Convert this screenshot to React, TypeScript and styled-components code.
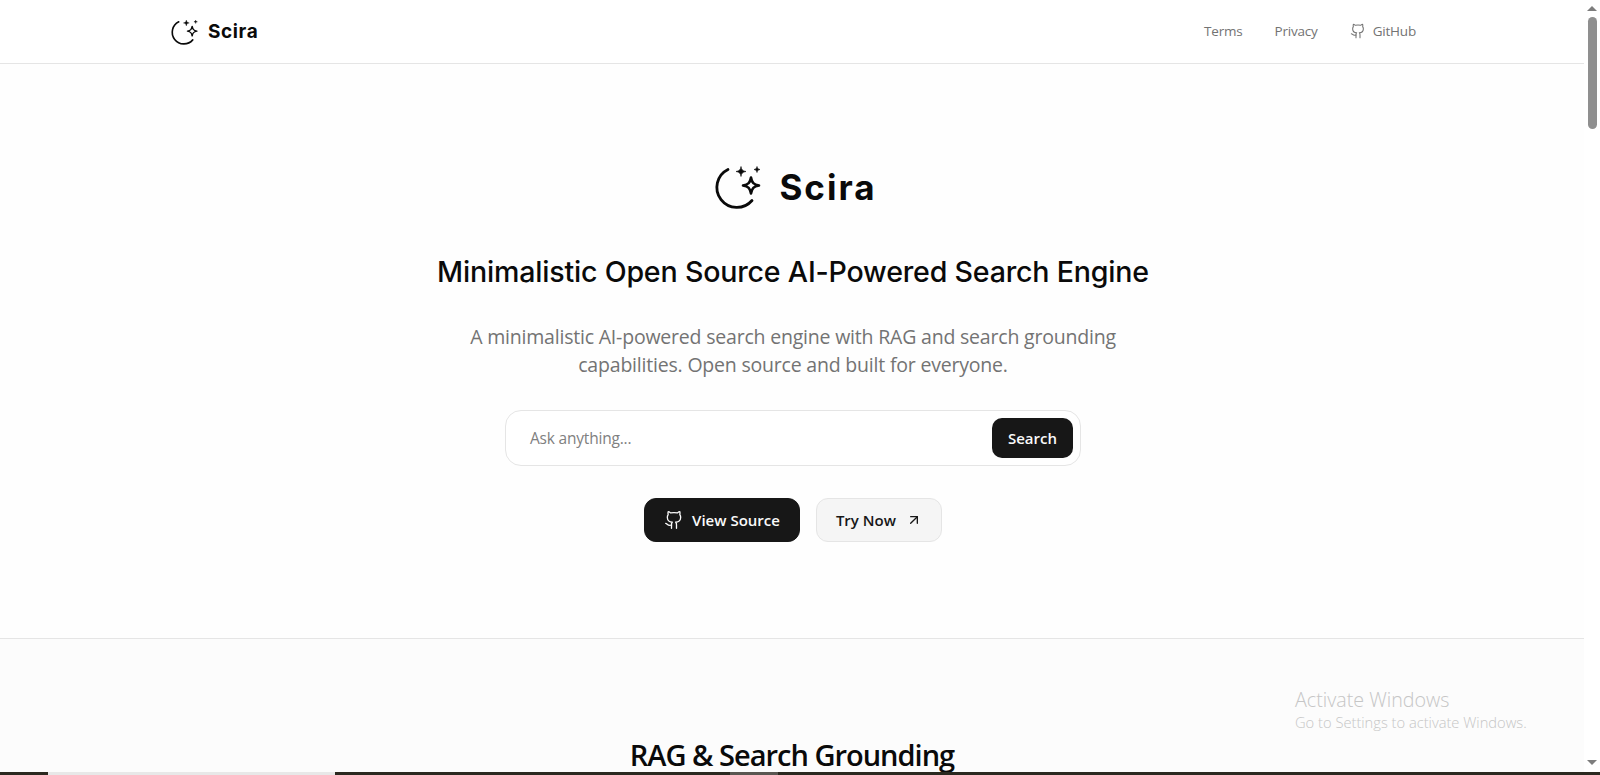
import React from 'react';
import styled, { createGlobalStyle } from 'styled-components';
import { ArrowUpRight } from 'lucide-react';

const GlobalStyle = createGlobalStyle`
  html, body {
    margin: 0;
    height: 100%;
    overflow: hidden;
    background: #fff;
    font-family: "Open Sans", "Noto Sans", sans-serif;
  }
  #root { height: 100%; }
  * { box-sizing: border-box; }
`;

const Screen = styled.div`
  height: 775px;
  display: flex;
  flex-direction: column;
`;

const Viewport = styled.div`
  flex: 1;
  min-height: 0;
  display: flex;
  position: relative;
`;

const Page = styled.div`
  flex: 1;
  min-width: 0;
  overflow: hidden;
`;

const Header = styled.header`
  height: 64px;
  border-bottom: 1px solid #e5e5e5;
  background: #fff;
`;

const HeaderInner = styled.div`
  max-width: 1280px;
  height: 100%;
  margin: 0 auto;
  padding: 0 16px 0 18px;
  display: flex;
  align-items: center;
  justify-content: space-between;
`;

const Brand = styled.div<{ $large?: boolean }>`
  display: flex;
  align-items: center;
  gap: ${p => (p.$large ? '18px' : '10px')};
  padding-left: ${p => (p.$large ? '4px' : '0')};
  color: #0a0a0a;
  font-family: Inter, sans-serif;
  font-weight: 700;
  font-size: ${p => (p.$large ? '35px' : '19px')};
  letter-spacing: ${p => (p.$large ? '2px' : '0.6px')};
`;

const Nav = styled.nav`
  display: flex;
  align-items: center;
  gap: 32px;
  padding-bottom: 2px;
  color: #737373;
  font-size: 13.5px;
  letter-spacing: -0.2px;
`;

const NavItem = styled.span`
  display: flex;
  align-items: center;
  gap: 7px;
`;

const Hero = styled.section`
  height: 574px;
  padding: 99px 0 0 2px;
  display: flex;
  flex-direction: column;
  align-items: center;
  background: #fefefe;
`;

const Title = styled.h1`
  margin: 41px 0 0;
  font-family: Inter, sans-serif;
  font-size: 28.6px;
  line-height: 40px;
  font-weight: 500;
  color: #0a0a0a;
  letter-spacing: -0.2px;
`;

const Lead = styled.p`
  margin: 31px 0 0;
  width: 672px;
  text-align: center;
  color: #737373;
  font-size: 19.5px;
  line-height: 28px;
  letter-spacing: -0.2px;
`;

const SearchBox = styled.div`
  margin-top: 31px;
  width: 576px;
  height: 56px;
  border: 1px solid #e5e5e5;
  border-radius: 16px;
  background: #fff;
  padding: 0 7px 0 24px;
  display: flex;
  align-items: center;
  justify-content: space-between;
`;

const Placeholder = styled.span`
  color: #808080;
  font-size: 15.5px;
  letter-spacing: -0.2px;
`;

const SearchButton = styled.button`
  width: 81px;
  height: 40px;
  border: 0;
  border-radius: 10px;
  background: #171717;
  color: #fafafa;
  font: 600 15px "Open Sans", sans-serif;
`;

const Actions = styled.div`
  margin-top: 32px;
  display: flex;
  gap: 16px;
`;

const ActionButton = styled.button<{ $dark?: boolean }>`
  height: 44px;
  padding: 0 19px;
  display: flex;
  align-items: center;
  gap: ${p => (p.$dark ? '8px' : '10px')};
  border-radius: 12px;
  border: 1px solid ${p => (p.$dark ? '#171717' : '#e5e5e5')};
  background: ${p => (p.$dark ? '#171717' : '#f5f5f5')};
  color: ${p => (p.$dark ? '#fafafa' : '#171717')};
  font: 600 15px "Open Sans", sans-serif;
`;

const Features = styled.section`
  border-top: 1px solid #e5e5e5;
  background: #fcfcfc;
  padding-top: 98px;
  text-align: center;
`;

const FeatureTitle = styled.h2`
  margin: 0;
  font-size: 29px;
  line-height: 36px;
  font-weight: 600;
  color: #0a0a0a;
  letter-spacing: -1px;
`;

const Scrollbar = styled.div`
  width: 16px;
  flex-shrink: 0;
  background: #fff;
  display: flex;
  flex-direction: column;
  align-items: center;
  padding: 6px 0 7px;
`;

const ScrollTrack = styled.div`
  flex: 1;
  width: 100%;
  padding: 6px 3px 0 4px;
`;

const ScrollThumb = styled.div`
  height: 112px;
  border-radius: 5px;
  background: #8f8f8f;
`;

const ScrollArrow = styled.div<{ $down?: boolean }>`
  width: 0;
  height: 0;
  border-left: 5px solid transparent;
  border-right: 5px solid transparent;
  ${p => (p.$down ? 'border-top: 5px solid #7d7d7d;' : 'border-bottom: 5px solid #7d7d7d;')}
`;

const Watermark = styled.div`
  position: absolute;
  left: 1295px;
  top: 687px;
  color: #c6c6c6;
  font-size: 14.7px;
  font-weight: 300;
  line-height: 21px;
`;

const WatermarkTitle = styled.div`
  font-size: 19.7px;
  line-height: 25px;
`;

const Taskbar = styled.div`
  height: 3px;
  flex-shrink: 0;
  background: #2b2920;
  display: flex;
`;

const TaskbarGap = styled.div<{ $w: number; $tone?: string }>`
  width: ${p => p.$w}px;
  background: ${p => p.$tone ?? 'transparent'};
`;

// moon arc with three sparkles
function Logo({ size }: { size: number }) {
  return (
    <svg width={size} height={size} viewBox="0 0 48 48" fill="none" stroke="currentColor">
      <g transform="translate(0 1.5)">
        <path d="M15 5 A20 20 0 1 0 39 36" strokeWidth="2.8" strokeLinecap="round" />
        <path d="M38 13 C39 18.500 40.500 20 46 21 C40.500 22 39 23.500 38 29 C37 23.500 35.500 22 30 21 C35.500 20 37 18.500 38 13 Z" strokeWidth="2.6" strokeLinejoin="round" />
        <path d="M28 2 C28.600 5.400 29.600 6.400 33 7 C29.600 7.600 28.600 8.600 28 12 C27.400 8.600 26.400 7.600 23 7 C26.400 6.400 27.400 5.400 28 2 Z" fill="currentColor" strokeWidth="0.6" />
        <path d="M44 2 C44.400 4 45 4.600 47 5 C45 5.400 44.400 6 44 8 C43.600 6 43 5.400 41 5 C43 4.600 43.600 4 44 2 Z" fill="currentColor" strokeWidth="0.6" />
      </g>
    </svg>
  );
}

function GithubMark({ size }: { size: number }) {
  return (
    <svg width={size} height={size} viewBox="0 0 24 24" fill="none" stroke="currentColor" strokeWidth="1.6" strokeLinecap="round" strokeLinejoin="round">
      <path d="M15 22v-4a4.8 4.8 0 0 0-1-3.5c3 0 6-2 6-5.5.08-1.25-.27-2.48-1-3.5.28-1.15.28-2.35 0-3.5 0 0-1 0-3 1.5-2.64-.5-5.36-.5-8 0C6 2 5 2 5 2c-.3 1.15-.3 2.35 0 3.5A5.403 5.403 0 0 0 4 9c0 3.5 3 5.5 6 5.5-.39.49-.68 1.05-.85 1.65-.17.6-.22 1.23-.15 1.85v4" />
      <path d="M9 18c-4.51 2-5-2-7-2" />
    </svg>
  );
}

export default function App() {
  return (
    <Screen>
      <GlobalStyle />
      <Viewport>
        <Page>
          <Header>
            <HeaderInner>
              <Brand>
                <Logo size={28} />
                Scira
              </Brand>
              <Nav>
                <NavItem>Terms</NavItem>
                <NavItem>Privacy</NavItem>
                <NavItem>
                  <GithubMark size={16} />
                  GitHub
                </NavItem>
              </Nav>
            </HeaderInner>
          </Header>
          <Hero>
            <Brand $large>
              <Logo size={48} />
              Scira
            </Brand>
            <Title>Minimalistic Open Source AI-Powered Search Engine</Title>
            <Lead>
              A minimalistic AI-powered search engine with RAG and search grounding capabilities. Open source and built for everyone.
            </Lead>
            <SearchBox>
              <Placeholder>Ask anything...</Placeholder>
              <SearchButton>Search</SearchButton>
            </SearchBox>
            <Actions>
              <ActionButton $dark>
                <GithubMark size={20} />
                View Source
              </ActionButton>
              <ActionButton>
                Try Now
                <ArrowUpRight size={16} />
              </ActionButton>
            </Actions>
          </Hero>
          <Features>
            <FeatureTitle>RAG &amp; Search Grounding</FeatureTitle>
          </Features>
        </Page>
        <Scrollbar>
          <ScrollArrow />
          <ScrollTrack>
            <ScrollThumb />
          </ScrollTrack>
          <ScrollArrow $down />
        </Scrollbar>
        <Watermark>
          <WatermarkTitle>Activate Windows</WatermarkTitle>
          Go to Settings to activate Windows.
        </Watermark>
      </Viewport>
      <Taskbar>
        <TaskbarGap $w={48} />
        <TaskbarGap $w={287} $tone="#e8e8e8" />
        <TaskbarGap $w={395} />
        <TaskbarGap $w={48} $tone="#5a5752" />
      </Taskbar>
    </Screen>
  );
}
